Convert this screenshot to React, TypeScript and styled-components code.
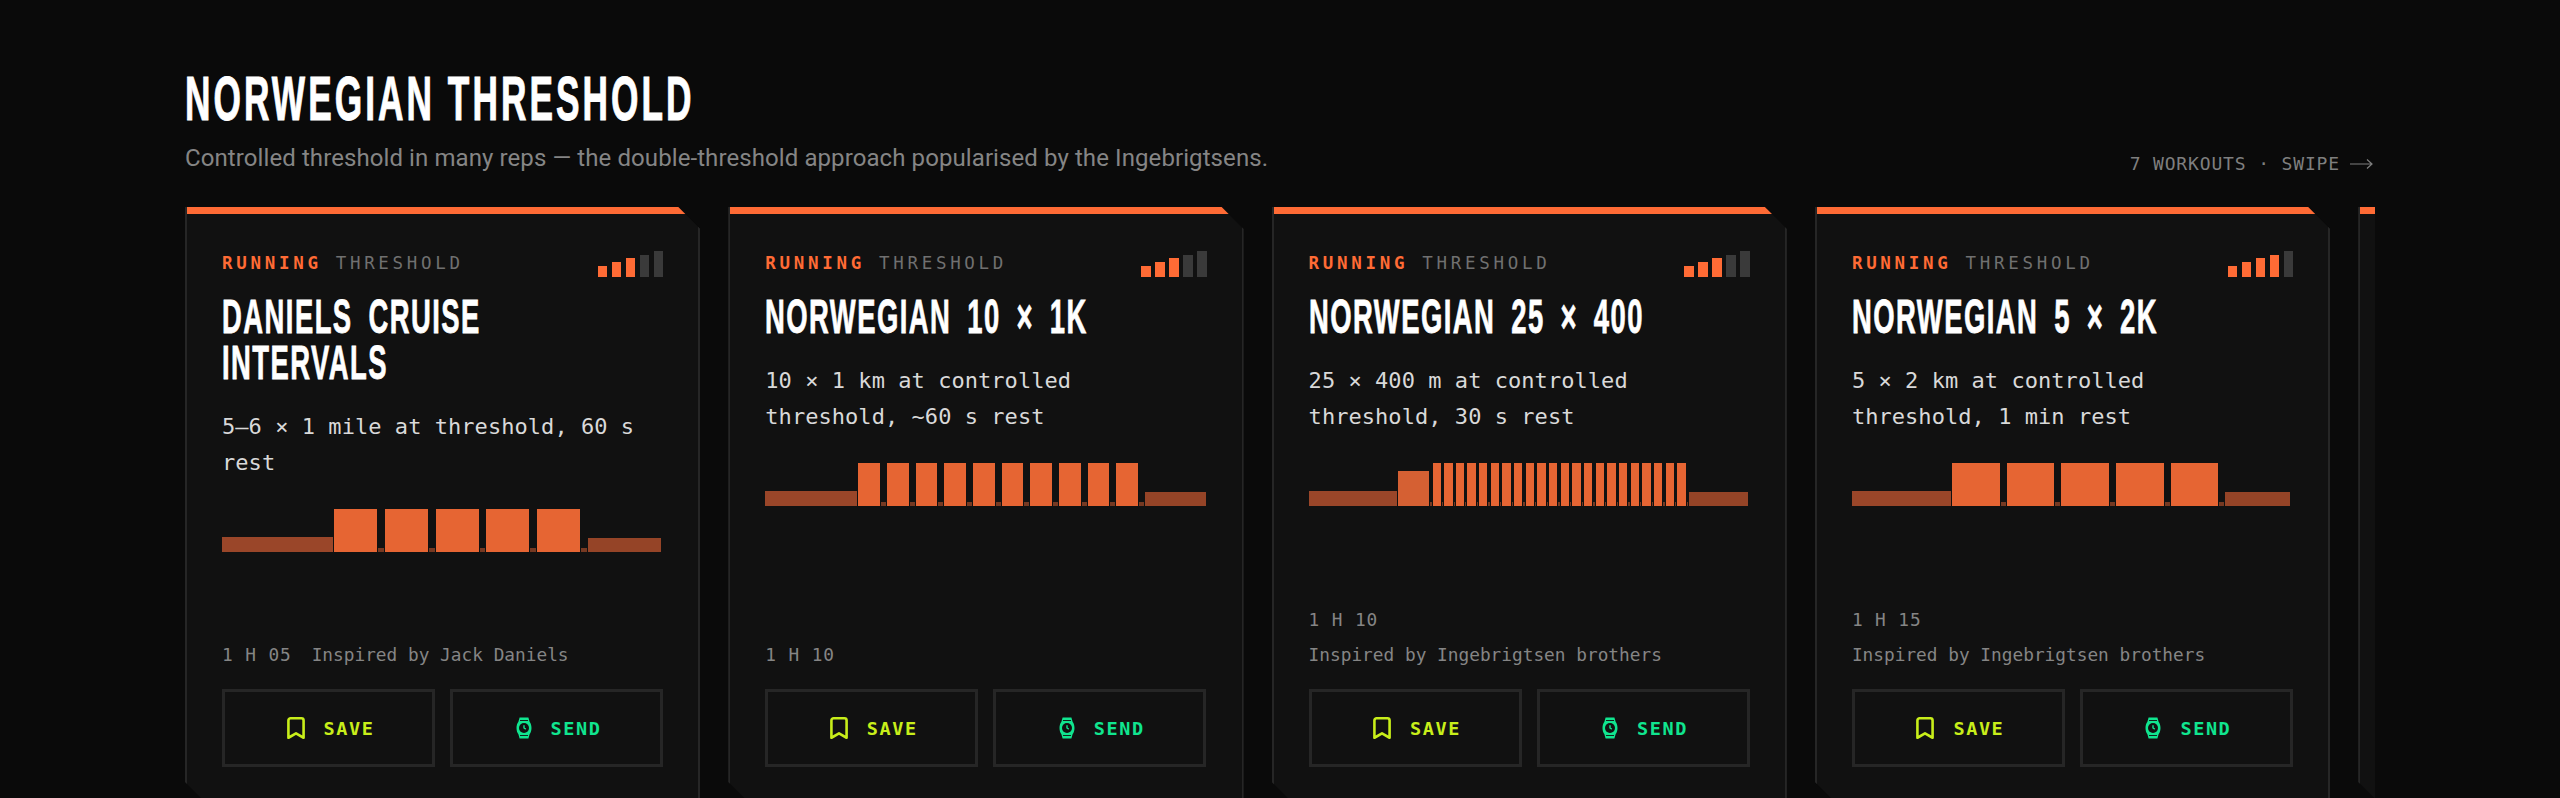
import React from "react";
import styled, { createGlobalStyle } from "styled-components";
import { Bookmark } from "lucide-react";

const Global = createGlobalStyle`
  html, body { margin: 0; padding: 0; background: #0a0a0a; height: 100%; overflow: hidden; }
  #root { height: 100%; }
`;

const MONO = `"DejaVu Sans Mono", "Liberation Mono", monospace`;
const DISPLAY = `"Liberation Sans", Arial, sans-serif`;
const SANS = `Roboto, "Noto Sans", sans-serif`;

const Page = styled.main`
  padding: 62px 185px 0;
  background: #0a0a0a;
`;

const Header = styled.header`
  display: flex;
  justify-content: space-between;
  align-items: flex-end;
  margin-bottom: 33px;
`;

const Heading = styled.h1`
  margin: 0;
  width: 920px;
  font-family: ${DISPLAY};
  font-size: 63px;
  line-height: 72px;
  font-weight: 700;
  color: #fff;
  letter-spacing: 5.4px;
  white-space: nowrap;
  -webkit-text-stroke: 1px #fff;
  transform: scaleX(0.56);
  transform-origin: left top;
`;

const Subtitle = styled.p`
  margin: 8px 0 0;
  font-family: ${SANS};
  font-size: 24px;
  line-height: 32px;
  font-weight: 400;
  color: #858585;
  letter-spacing: 0.09px;
`;

const SwipeHint = styled.div`
  display: flex;
  align-items: center;
  gap: 10px;
  font-family: ${MONO};
  font-size: 18px;
  line-height: 24px;
  letter-spacing: 0.85px;
  color: #7f7f7f;
  padding-right: 2px;
  margin-bottom: -1.5px;
`;

const Scroller = styled.div`
  display: flex;
  gap: 28px;
  overflow: hidden;
`;

const Card = styled.article`
  flex: 0 0 515.3px;
  min-width: 0;
  height: 597px;
  display: flex;
  flex-direction: column;
  box-sizing: border-box;
  background: #111111;
  border: 2px solid #262626;
  border-top: none;
  clip-path: polygon(0 0, calc(100% - 22px) 0, 100% 22px, 100% 100%, 22px 100%, 0 calc(100% - 22px));
`;

const AccentBar = styled.div`
  height: 7px;
  flex: none;
  background: #ff6b35;
`;

const CardBody = styled.div`
  flex: 1;
  display: flex;
  flex-direction: column;
  padding: 32px 35px 35px;
  min-height: 0;
  min-width: 0;
`;

const TopRow = styled.div`
  display: flex;
  justify-content: space-between;
  align-items: flex-end;
  height: 31px;
`;

const Tags = styled.div`
  display: flex;
  gap: 14px;
  font-family: ${MONO};
  font-size: 17.5px;
  line-height: 24px;
  letter-spacing: 3.7px;
  margin-bottom: 2px;
`;

const Sport = styled.span`
  color: #ff6b35;
  font-weight: 700;
`;

const Kind = styled.span`
  color: #707070;
`;

const Levels = styled.div`
  display: flex;
  align-items: flex-end;
  gap: 4.4px;
`;

const Level = styled.span<{ $on: boolean }>`
  width: 9.6px;
  background: ${(p) => (p.$on ? "#ff6b35" : "#3a3a3a")};
`;

const CardTitle = styled.h2`
  margin: 16px 0 0;
  width: 700px;
  font-family: ${DISPLAY};
  font-size: 49px;
  line-height: 46px;
  font-weight: 700;
  color: #fff;
  letter-spacing: 2.6px;
  word-spacing: 12px;
  -webkit-text-stroke: 0.8px #fff;
  transform: scaleX(0.56);
  transform-origin: left top;
`;

const Description = styled.p`
  margin: 24px 0 0;
  max-width: 430px;
  font-family: ${MONO};
  font-size: 22px;
  line-height: 36px;
  color: #d9d9d9;
  letter-spacing: 0.05px;
`;

const Wave = styled.div`
  display: flex;
  align-items: flex-end;
  gap: 1px;
  height: 43px;
  margin-top: 28px;
`;

const SEG = {
  warm: "#9a4629",
  cool: "#954427",
  work: "#e66533",
  steady: "#d56033",
  rest: "#763922",
};

const Segment = styled.span<{ $kind: keyof typeof SEG }>`
  flex: none;
  background: ${(p) => SEG[p.$kind]};
`;

const Footer = styled.div`
  margin-top: auto;
`;

const Meta = styled.div`
  display: flex;
  flex-wrap: wrap;
  gap: 11px 20px;
  font-family: ${MONO};
  font-size: 17.8px;
  line-height: 24px;
  color: #858585;
  margin-bottom: 22px;
`;

const Duration = styled.span`
  letter-spacing: 0.9px;
`;

const Actions = styled.div`
  display: grid;
  grid-template-columns: 213px 213px;
  gap: 15px;
`;

const ActionButton = styled.button<{ $color: string }>`
  height: 78px;
  box-sizing: border-box;
  display: flex;
  align-items: center;
  justify-content: center;
  gap: 15px;
  padding: 0;
  background: transparent;
  border: 3px solid #262626;
  color: ${(p) => p.$color};
  font-family: ${MONO};
  font-size: 18.5px;
  font-weight: 700;
  letter-spacing: 1.6px;
`;

const WatchIcon = () => (
  <svg width="24" height="24" viewBox="0 0 24 24" aria-hidden="true">
    <path d="M7.6 1.500h8.800l1.200 4.200c1.200 1.600 1.900 3.900 1.900 6.300s-.7 4.700-1.900 6.300l-1.200 4.200H7.600l-1.200-4.200C5.200 16.700 4.500 14.400 4.500 12s.7-4.700 1.900-6.300z" fill="currentColor" />
    <path d="M8 4.500h8M8 19.500h8" stroke="#111" strokeWidth="0.9" />
    <circle cx="12" cy="12" r="5" fill="#111" />
    <path d="M12 9.200V12l1.800 1.200" fill="none" stroke="currentColor" strokeWidth="1.400" />
  </svg>
);

const ArrowIcon = () => (
  <svg width="23" height="12" viewBox="0 0 23 12" aria-hidden="true">
    <path d="M0 6h22M17 1.500 22 6l-5 4.500" fill="none" stroke="currentColor" strokeWidth="1.200" />
  </svg>
);

type Seg = [keyof typeof SEG, number, number];

const reps = (n: number, w: number, rest: number): Seg[] => {
  const out: Seg[] = [];
  for (let i = 0; i < n; i++) {
    out.push(["work", w, 43], ["rest", rest, 4]);
  }
  return out;
};

const repsRestFirst = (n: number, w: number, rest: number): Seg[] => {
  const out: Seg[] = [];
  for (let i = 0; i < n; i++) {
    out.push(["rest", rest, 4], ["work", w, 43]);
  }
  out.push(["rest", rest, 4]);
  return out;
};

const workouts = [
  {
    title: "DANIELS CRUISE INTERVALS",
    text: "5–6 × 1 mile at threshold, 60 s rest",
    level: 3,
    time: "1 H 05",
    credit: "Inspired by Jack Daniels",
    wave: [["warm", 111, 15], ...reps(5, 43, 5.8), ["cool", 73, 14]] as Seg[],
  },
  {
    title: "NORWEGIAN 10 × 1K",
    text: "10 × 1 km at controlled threshold, ~60 s rest",
    level: 3,
    time: "1 H 10",
    credit: "",
    wave: [["warm", 92, 15], ...reps(10, 21.7, 5), ["cool", 60.5, 14]] as Seg[],
  },
  {
    title: "NORWEGIAN 25 × 400",
    text: "25 × 400 m at controlled threshold, 30 s rest",
    level: 3,
    time: "1 H 10",
    credit: "Inspired by Ingebrigtsen brothers",
    wave: [["warm", 88.6, 15], ["steady", 31, 35], ...repsRestFirst(22, 8.33, 1.34), ["cool", 59, 14]] as Seg[],
  },
  {
    title: "NORWEGIAN 5 × 2K",
    text: "5 × 2 km at controlled threshold, 1 min rest",
    level: 4,
    time: "1 H 15",
    credit: "Inspired by Ingebrigtsen brothers",
    wave: [["warm", 99, 15], ...reps(5, 47.7, 5), ["cool", 65, 14]] as Seg[],
  },
];

const LEVEL_HEIGHTS = [11, 15, 19, 22, 26];

export default function App() {
  return (
    <Page>
      <Global />
      <Header>
        <div>
          <Heading>NORWEGIAN THRESHOLD</Heading>
          <Subtitle>Controlled threshold in many reps — the double-threshold approach popularised by the Ingebrigtsens.</Subtitle>
        </div>
        <SwipeHint>
          <span>7 WORKOUTS · SWIPE</span>
          <ArrowIcon />
        </SwipeHint>
      </Header>
      <Scroller>
        {workouts.map((w) => (
          <Card key={w.title}>
            <AccentBar />
            <CardBody>
              <TopRow>
                <Tags>
                  <Sport>RUNNING</Sport>
                  <Kind>THRESHOLD</Kind>
                </Tags>
                <Levels>
                  {LEVEL_HEIGHTS.map((h, i) => (
                    <Level key={h} $on={i < w.level} style={{ height: h }} />
                  ))}
                </Levels>
              </TopRow>
              <CardTitle>{w.title}</CardTitle>
              <Description>{w.text}</Description>
              <Wave>
                {w.wave.map(([kind, width, height], i) => (
                  <Segment key={i} $kind={kind} style={{ width, height }} />
                ))}
              </Wave>
              <Footer>
                <Meta>
                  <Duration>{w.time}</Duration>
                  {w.credit && <span>{w.credit}</span>}
                </Meta>
                <Actions>
                  <ActionButton $color="#c8ee1a">
                    <Bookmark size={26} strokeWidth={2.4} />
                    SAVE
                  </ActionButton>
                  <ActionButton $color="#10e58f">
                    <WatchIcon />
                    SEND
                  </ActionButton>
                </Actions>
              </Footer>
            </CardBody>
          </Card>
        ))}
        <Card>
          <AccentBar />
        </Card>
      </Scroller>
    </Page>
  );
}
